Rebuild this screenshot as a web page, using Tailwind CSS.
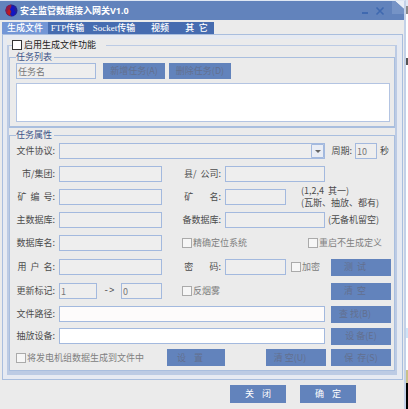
<!DOCTYPE html>
<html lang="zh-CN">
<head>
<meta charset="utf-8">
<title>安全监管数据接入网关V1.0</title>
<script src="https://cdn.jsdelivr.net/npm/@tailwindcss/browser@4"></script>
</head>
<body class="flex min-h-screen bg-white font-['Noto_Sans_CJK_SC',sans-serif] text-[9px] leading-[12px] text-[#4c4c4c]">
<div class="flex min-w-0 flex-1 flex-col border-t border-r-2 border-t-[#dfe7f3] border-r-[#c3d1e8] bg-[#ebebeb]">

  <header class="flex h-[19px] items-center bg-[#6283bc] pl-[5px] text-white">
    <svg class="h-[13px] w-[13px]" viewBox="0 0 13 13" aria-hidden="true">
      <circle cx="6.5" cy="6.5" r="6" fill="#23238e"/>
      <path d="M6 .5A6 6 0 0 0 3 11.300L5 9 4.500 6 7 4z" fill="#8e1c46"/>
      <path d="M7 1.500l3 2-1 3 2 2-3 4-2-2 1-3-2-2z" fill="#1414c4"/>
      <path d="M4 5l2 2-1 4 2 1.500-3-1-2-3z" fill="#c01822"/>
    </svg>
    <h1 class="ml-[2px] flex-1 font-['Open_Sans','Noto_Sans_CJK_SC',sans-serif] font-bold whitespace-nowrap">安全监管数据接入网关V1.0</h1>
    <button type="button" aria-label="最小化" class="flex h-[14px] w-[12px] items-center justify-center">
      <svg class="h-[10px] w-[8px]" viewBox="0 0 8 10"><path d="M1 7h6" stroke="#3f69b0" stroke-width="2"/></svg>
    </button>
    <button type="button" aria-label="关闭窗口" class="ml-[4px] flex h-[14px] w-[10px] items-center justify-center">
      <svg class="h-[10px] w-[10px]" viewBox="0 0 10 10"><path d="M1.500 1.500l7 7M8.500 1.500l-7 7" stroke="#3f69b0" stroke-width="1.600"/></svg>
    </button>
    <svg class="ml-[6px] h-[19px] w-[13px] self-start" viewBox="0 0 13 19" aria-hidden="true">
      <path d="M4 0H13V8z" fill="#e9eef6"/><path d="M1 0h3l9 8v5H1z" fill="#7593c6"/>
    </svg>
  </header>

  <nav class="mt-[2px] ml-[2px] flex h-[12px] w-[212px] shrink-0 items-center bg-[#466cb0] font-['Liberation_Serif','Noto_Sans_CJK_SC',serif] font-medium whitespace-pre text-white">
    <button type="button" class="h-[12px] w-[46px] bg-[#7396d6]">生成文件</button>
    <button type="button" class="w-[39px]">FTP传输</button>
    <button type="button" class="w-[54px]">Socket传输</button>
    <button type="button" class="w-[38px]">视频</button>
    <button type="button" class="flex-1">其  它</button>
  </nav>

  <main class="mr-[1px] ml-[2px] border border-[#a9bede] bg-[#e6eaf2] pr-[5px] pb-[4px] pl-[4px]">
    <div class="bg-[#ebebeb]">
    <fieldset class="mt-[4px] min-w-0 border-2 border-t border-b-4 border-[#bccbe4]">
      <legend class="ml-[3px] h-[12px] pr-[10px]">
        <label class="flex items-center gap-[2px] text-[#222]"><input type="checkbox" class="h-[10px] w-[10px] appearance-none border border-[#333] bg-white">启用生成文件功能</label>
      </legend>

      <fieldset class="min-w-0 border border-b-2 border-[#a9bede] pr-[4px] pb-[4px] pl-[6px]">
        <legend class="h-[12px] pr-[2px] text-[#3d5488]">任务列表</legend>
        <div class="flex gap-[4px]">
          <input type="text" value="任务名" aria-label="任务名" class="mr-[3px] h-[16px] w-[80px] border border-[#a3b9de] bg-[#eee] px-[1px] text-[#777]">
          <button type="button" disabled class="h-[16px] w-[62px] bg-[#6283bc] text-[#62708f]">新增任务(A)</button>
          <button type="button" disabled class="h-[16px] w-[62px] bg-[#6283bc] text-[#62708f]">删除任务(D)</button>
        </div>
        <textarea aria-label="任务列表" class="mt-[4px] block h-[39px] w-full resize-none border border-[#b3c4e2] bg-white"></textarea>
      </fieldset>

      <fieldset class="mt-[1px] min-w-0 border border-[#a9bede] pr-[3px] pb-[4px] pl-[6px]">
        <legend class="h-[12px] pr-[2px] text-[#3d5488]">任务属性</legend>

        <div class="mt-[2px] flex items-center">
          <label for="protocol" class="w-[43px] pr-[4px] text-right whitespace-pre">文件协议:</label>
          <div class="relative min-w-0 flex-1">
            <select id="protocol" class="block h-[16px] w-full appearance-none border border-[#a3b9de] bg-[#eee]"><option></option></select>
            <svg class="pointer-events-none absolute top-[1px] right-[1px] h-[14px] w-[13px]" viewBox="0 0 13 14"><path d="M.5.5h12v13H.5z" fill="#e9edf5" stroke="#a3b9de"/><path d="M4 6h6L7 9z" fill="#666"/></svg>
          </div>
          <label for="period" class="ml-[6px] whitespace-nowrap">周期:</label>
          <input id="period" type="text" value="10" class="ml-[3px] h-[16px] w-[22px] border border-[#a3b9de] bg-[#eee] px-[1px] text-[#777]">
          <span class="mr-[2px] ml-[3px]">秒</span>
        </div>

        <div class="mt-[7px] grid auto-rows-[16px] grid-cols-[43px_103fr_20px_43px_100fr_66px] items-center gap-y-[7px] whitespace-pre">
          <label for="city" class="pr-[4px] text-right">市/集团:</label>
          <input id="city" type="text" class="h-[16px] min-w-0 border border-[#a3b9de] bg-[#eee]">
          <label for="county" class="col-start-4 pr-[4px] text-right">县/  公司:</label>
          <input id="county" type="text" class="h-[16px] min-w-0 border border-[#a3b9de] bg-[#eee]">

          <label for="mineno" class="col-start-1 pr-[4px] text-right">矿  编  号:</label>
          <input id="mineno" type="text" class="h-[16px] min-w-0 border border-[#a3b9de] bg-[#eee]">
          <label for="mine" class="col-start-4 pr-[4px] text-right">矿        名:</label>
          <div class="col-span-2 flex items-center">
            <input id="mine" type="text" class="h-[16px] w-[61px] border border-[#a3b9de] bg-[#eee]">
            <p class="ml-[15px]">(1,2,4  其一)
(瓦斯、抽放、都有)</p>
          </div>

          <label for="maindb" class="col-start-1 pr-[4px] text-right">主数据库:</label>
          <input id="maindb" type="text" class="h-[16px] min-w-0 border border-[#a3b9de] bg-[#eee]">
          <label for="backdb" class="col-start-4 pr-[4px] text-right">备数据库:</label>
          <input id="backdb" type="text" class="h-[16px] min-w-0 border border-[#a3b9de] bg-[#eee]">
          <span class="pl-[3px]">(无备机留空)</span>

          <label for="dbname" class="col-start-1 pr-[4px] text-right">数据库名:</label>
          <input id="dbname" type="text" class="h-[16px] min-w-0 border border-[#a3b9de] bg-[#eee]">
          <div class="col-span-3 col-start-4 flex justify-between pr-[9px] text-[#808080]">
            <label class="flex items-center gap-[1px]"><input type="checkbox" class="h-[10px] w-[10px] appearance-none border border-[#aaa] bg-[#f6f6f6]">精确定位系统</label>
            <label class="flex items-center gap-[1px]"><input type="checkbox" class="h-[10px] w-[10px] appearance-none border border-[#aaa] bg-[#f6f6f6]">重启不生成定义</label>
          </div>
        </div>

        <div class="mt-[8px] grid auto-rows-[16px] grid-cols-[43px_103fr_20px_43px_100fr_6px_60px] items-center gap-y-[8px] whitespace-pre">
          <label for="user" class="pr-[4px] text-right">用  户  名:</label>
          <input id="user" type="text" class="h-[16px] min-w-0 border border-[#a3b9de] bg-[#eee]">
          <label for="pwd" class="col-start-4 pr-[4px] text-right">密        码:</label>
          <div class="flex items-center gap-[5px]">
            <input id="pwd" type="password" class="h-[16px] w-[61px] border border-[#a3b9de] bg-[#eee]">
            <label class="flex items-center gap-[1px] text-[#808080]"><input type="checkbox" class="h-[10px] w-[10px] appearance-none border border-[#aaa] bg-[#f6f6f6]">加密</label>
          </div>
          <button type="button" disabled class="col-start-7 h-[17px] bg-[#6283bc] pr-[12px] text-[#62708f]">测  试</button>

          <label for="flagfrom" class="col-start-1 pr-[4px] text-right">更新标记:</label>
          <div class="flex items-center justify-between">
            <input id="flagfrom" type="text" value="1" class="h-[16px] w-[38px] border border-[#a3b9de] bg-[#eee] px-[1px] text-[#777]">
            <span class="font-['Liberation_Mono',monospace]">-&gt;</span>
            <input type="text" value="0" aria-label="更新标记目标值" class="h-[16px] w-[41px] border border-[#a3b9de] bg-[#eee] px-[1px] text-[#777]">
          </div>
          <label class="col-span-2 col-start-4 flex items-center gap-[1px] text-[#808080]"><input type="checkbox" class="h-[10px] w-[10px] appearance-none border border-[#aaa] bg-[#f6f6f6]">反烟雾</label>
          <button type="button" disabled class="col-start-7 h-[17px] bg-[#6283bc] pr-[12px] text-[#62708f]">清  空</button>
        </div>

        <div class="mt-[7px] grid auto-rows-[16px] grid-cols-[43px_1fr_60px] items-center gap-y-[6px] whitespace-pre">
          <label for="path" class="pr-[4px] text-right">文件路径:</label>
          <input id="path" type="text" class="mr-[6px] h-[16px] min-w-0 border border-[#a3b9de] bg-[#fdfbfb]">
          <button type="button" disabled class="h-[17px] bg-[#6283bc] pr-[12px] text-[#62708f]">查 找(B)</button>
          <label for="device" class="pr-[4px] text-right">抽放设备:</label>
          <input id="device" type="text" class="mr-[6px] h-[16px] min-w-0 border border-[#a3b9de] bg-white">
          <button type="button" disabled class="h-[17px] bg-[#6283bc] text-[#62708f]">设 备(E)</button>
        </div>

        <div class="mt-[5px] flex items-center whitespace-pre">
          <label class="flex w-[151px] items-center gap-[1px] text-[#808080]"><input type="checkbox" class="h-[10px] w-[10px] appearance-none border border-[#aaa] bg-[#f6f6f6]">将发电机组数据生成到文件中</label>
          <button type="button" disabled class="h-[17px] w-[58px] bg-[#6283bc] pr-[12px] text-[#62708f]">设    置</button>
          <button type="button" disabled class="ml-auto h-[17px] w-[60px] bg-[#6283bc] pr-[12px] text-[#62708f]">清 空(U)</button>
          <button type="button" disabled class="ml-[5px] h-[17px] w-[60px] bg-[#6283bc] text-[#62708f]">保  存(S)</button>
        </div>
      </fieldset>
    </fieldset>
    </div>
  </main>

  <footer class="flex justify-end gap-[14px] pt-[5px] pr-[48px] pb-[6px] whitespace-pre text-white">
    <button type="button" class="h-[18px] w-[56px] bg-[#6283bc]">关    闭</button>
    <button type="button" class="h-[18px] w-[56px] bg-[#6283bc]">确    定</button>
  </footer>
</div>
<div class="flex w-[2px] flex-col" aria-hidden="true">
  <div class="h-[6px] bg-[#dfe7f3]"></div>
  <div class="h-[8px] bg-[#8a8a8a]"></div>
  <div class="h-[44px]"></div>
  <div class="h-[7px] bg-[#555]"></div>
  <div class="flex-1"></div>
  <div class="h-[10px] bg-[#cfe3f5]"></div>
  <div class="h-[32px]"></div>
  <div class="h-[13px] bg-[#c9c08a]"></div>
  <div class="h-[26px] bg-black"></div>
</div>
</body>
</html>
